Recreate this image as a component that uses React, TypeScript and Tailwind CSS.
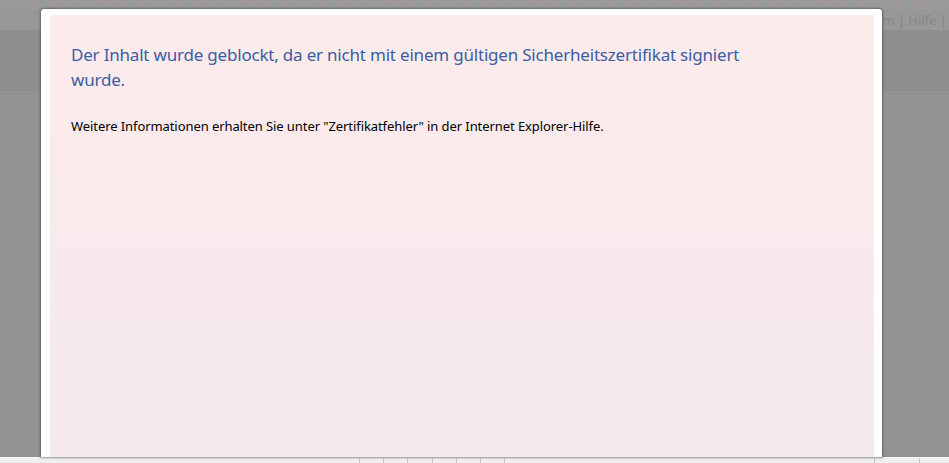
import React from 'react';

const App = () => {
  return (
    <div
      className="relative h-[463px] w-full overflow-hidden bg-[#939393]"
      style={{ fontFamily: '"Noto Sans", "Open Sans", sans-serif' }}
    >
      {/* page behind the dialog */}
      <div className="flex h-full flex-col">
        <div className="h-[3px] bg-[repeating-linear-gradient(90deg,#9a9a9a_0px,#9a9a9a_13px,#a8929a_13px,#a8929a_18px)]" />
        <div className="h-[7px] bg-[#9a9a9a]" />
        <div className="flex h-[20px] items-start justify-end bg-[#989898] pr-[2px] text-[13px] leading-[20px] text-[#878787]">
          Impressum | Hilfe |
        </div>
        <div className="h-[61px] border-b border-[#8a8a8a] bg-[#8e8e8e]" />
        <div className="flex-1 bg-[#939393]" />
        <div className="h-[2px] bg-[#8f8f8f]" />
        <div className="h-[1px] bg-[#fafafa]" />
        <div className="flex h-[5px] bg-[#f0eeee]">
          <div className="w-[359px]" />
          <div className="w-[24px] border-l border-[#c8c4c4]" />
          <div className="w-[24px] border-l border-[#c8c4c4]" />
          <div className="w-[25px] border-l border-[#c8c4c4]" />
          <div className="w-[24px] border-l border-[#c8c4c4]" />
          <div className="w-[24px] border-l border-[#c8c4c4]" />
          <div className="w-[24px] border-l border-[#c8c4c4]" />
          <div className="w-[370px] border-l border-[#c8c4c4]" />
          <div className="w-[45px] border-l border-[#c8c4c4]" />
          <div className="flex-1 border-l border-[#c8c4c4]" />
        </div>
      </div>

      {/* dialog */}
      <div className="absolute left-[41px] top-[9px] flex h-[448px] w-[841px] flex-col rounded-t-[3px] bg-white pl-[9px] pr-[8px] pt-[6px] shadow-[0_0_2px_1px_rgba(60,60,60,0.55)]">
        <div className="flex-1 bg-gradient-to-b from-[#fcebeb] to-[#f5e9ed] pl-[21px] pt-[27px]">
          <h1 className="w-[690px] text-[17px] font-normal leading-[25px] tracking-[-0.2px] text-[#3a5da3]">
            Der Inhalt wurde geblockt, da er nicht mit einem gültigen Sicherheitszertifikat signiert wurde.
          </h1>
          <p className="mt-[25px] text-[13px] leading-[18px] tracking-[-0.08px] text-black">
            Weitere Informationen erhalten Sie unter "Zertifikatfehler" in der Internet Explorer-Hilfe.
          </p>
        </div>
      </div>
    </div>
  );
};

export default App;
